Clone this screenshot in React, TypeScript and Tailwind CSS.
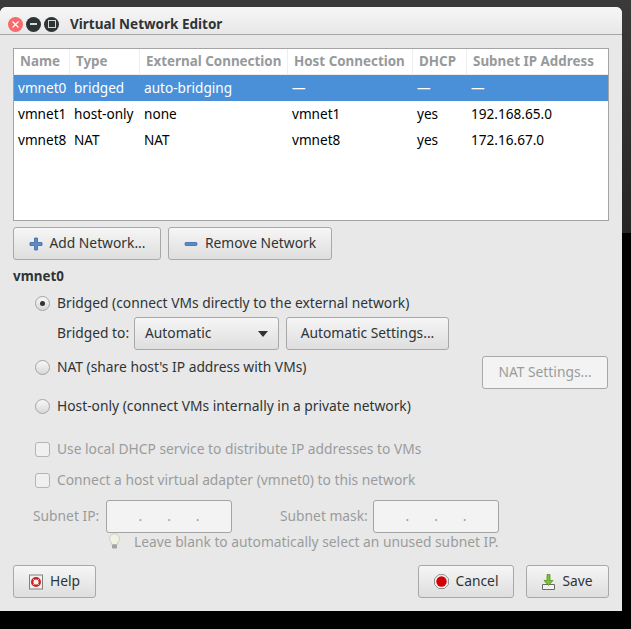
import React from 'react';

const font = "font-['Noto_Sans',sans-serif]";

const columns = [
  { label: 'Name', w: 'w-[56px]' },
  { label: 'Type', w: 'w-[70px]' },
  { label: 'External Connection', w: 'w-[148px]' },
  { label: 'Host Connection', w: 'w-[125px]' },
  { label: 'DHCP', w: 'w-[54px]' },
  { label: 'Subnet IP Address', w: 'flex-1' },
];

const rows = [
  ['vmnet0', 'bridged', 'auto-bridging', '—', '—', '—'],
  ['vmnet1', 'host-only', 'none', 'vmnet1', 'yes', '192.168.65.0'],
  ['vmnet8', 'NAT', 'NAT', 'vmnet8', 'yes', '172.16.67.0'],
];

const Btn = ({ className, disabled, children }: { className: string; disabled?: boolean; children: React.ReactNode }) => (
  <div
    className={`h-[33px] flex items-center justify-center gap-[7px] rounded-[3px] border border-[#a8a8a8] ${
      disabled ? 'bg-[#f3f3f3] text-[#9a9c9c]' : 'bg-gradient-to-b from-[#f6f6f6] to-[#dedede] text-[#2e3436]'
    } ${className}`}
  >
    {children}
  </div>
);

const Radio = ({ checked }: { checked?: boolean }) => (
  <span className="w-[15px] h-[15px] rounded-full border border-[#a4a4a4] bg-gradient-to-b from-[#f8f8f8] to-[#d8d8d8] flex items-center justify-center shrink-0">
    {checked && <span className="w-[5px] h-[5px] rounded-full bg-[#2e3436]" />}
  </span>
);

const IpInput = () => (
  <div className="w-[126px] h-[33px] rounded-[3px] border border-[#a4a4a4] bg-[#f3f3f3] flex items-center justify-center gap-[25px] text-[#9a9c9c]">
    <span>.</span>
    <span>.</span>
    <span>.</span>
  </div>
);

export default function App() {
  return (
    <div className={`w-[631px] h-[629px] bg-[linear-gradient(#3a3a3a_0px,#262626_233px,#000000_233px)] overflow-hidden pt-[7px] text-[13.8px] ${font}`}>
      <div className="w-[622px] h-[604px] bg-[#e8e8e8] rounded-t-[6px] flex flex-col">
        {/* title bar */}
        <div className="h-[28px] shrink-0 rounded-t-[6px] border-b border-[#a6a6a6] bg-gradient-to-b from-[#f6f6f6] to-[#e8e8e8] flex items-center pl-[8px] pt-[7px]">
          <span className="w-[15px] h-[15px] rounded-full bg-[#f8696b] flex items-center justify-center">
            <svg width="9" height="9" viewBox="0 0 9 9"><path d="M1.5 1.5l6 6M7.5 1.5l-6 6" stroke="#fff" strokeWidth="1.2" /></svg>
          </span>
          <span className="ml-[3px] w-[15px] h-[15px] rounded-full bg-[#2e3436] flex items-center justify-center">
            <span className="w-[7px] h-[2px] bg-[#d8d8d8]" />
          </span>
          <span className="ml-[3px] w-[15px] h-[15px] rounded-full bg-[#2e3436] flex items-center justify-center">
            <span className="w-[8px] h-[8px] border-[1.5px] border-[#d8d8d8]" />
          </span>
          <span className="ml-[11px] font-bold text-[#2e3436] text-[13.5px]">Virtual Network Editor</span>
        </div>

        <div className="flex-1 px-[13px] pt-[13px] flex flex-col">
          {/* network table */}
          <div className="w-[596px] h-[173px] bg-white border border-[#a4a4a4] shrink-0 text-[13.6px]">
            <div className="flex h-[26px] border-b border-[#eeeeee]">
              {columns.map((c) => (
                <div key={c.label} className={`${c.w} pl-[6px] font-bold text-[13.4px] text-[#979a9a] border-r border-[#eeeeee] last:border-r-0 flex items-center whitespace-nowrap`}>
                  {c.label}
                </div>
              ))}
            </div>
            {rows.map((r, i) => (
              <div key={r[0]} className={`flex items-center h-[26px] ${i === 0 ? 'bg-[#4a90d9] text-white' : 'text-black'}`}>
                {r.map((cell, j) => (
                  <div key={j} className={`${columns[j].w} pl-[4px] whitespace-nowrap`}>{cell}</div>
                ))}
              </div>
            ))}
          </div>

          {/* add / remove */}
          <div className="flex gap-[7px] mt-[6px]">
            <Btn className="w-[148px]">
              <svg width="14" height="14" viewBox="0 0 14 14"><path d="M5.500 1h3v4.500H13v3H8.500V13h-3V8.500H1v-3h4.500z" fill="#5c8ac8" stroke="#3f69a6" strokeWidth="0.8" strokeLinejoin="round" /></svg>
              <span>Add Network...</span>
            </Btn>
            <Btn className="w-[164px]">
              <svg width="14" height="14" viewBox="0 0 14 14"><rect x="1" y="5.500" width="12" height="3" rx="1" fill="#5c8ac8" stroke="#3f69a6" strokeWidth="0.8" /></svg>
              <span>Remove Network</span>
            </Btn>
          </div>

          <div className="mt-[7px] h-[19px] font-bold text-[13.4px] text-[#2e3436] flex items-center">vmnet0</div>

          <div className="pl-[22px] text-[#2e3436]">
            <div className="mt-[7px] h-[20px] flex items-center gap-[7px]">
              <Radio checked />
              <span>Bridged (connect VMs directly to the external network)</span>
            </div>
            <div className="mt-[4px] flex items-center">
              <span className="pl-[22px] w-[99px] whitespace-nowrap">Bridged to:</span>
              <Btn className="w-[145px] !justify-between px-[10px]">
                <span>Automatic</span>
                <svg width="10" height="6" viewBox="0 0 10 6"><path d="M0 0h10L5 6z" fill="#2e3436" /></svg>
              </Btn>
              <Btn className="ml-[7px] w-[163px]">Automatic Settings...</Btn>
            </div>
            <div className="mt-[7px] h-[39px] flex items-start justify-between pr-[1px]">
              <div className="h-[20px] flex items-center gap-[7px]">
                <Radio />
                <span>NAT (share host's IP address with VMs)</span>
              </div>
              <Btn disabled className="w-[126px] mt-[-1px]">NAT Settings...</Btn>
            </div>
            <div className="mt-[-9px] pt-[9px] h-[29px] flex items-center gap-[7px]">
              <Radio />
              <span>Host-only (connect VMs internally in a private network)</span>
            </div>
            <div className="mt-[23px] h-[20px] flex items-center gap-[7px] text-[#9a9c9c]">
              <span className="w-[15px] h-[15px] rounded-[3px] border border-[#b4b4b4] bg-[#f0f0f0] shrink-0" />
              <span>Use local DHCP service to distribute IP addresses to VMs</span>
            </div>
            <div className="mt-[11px] h-[20px] flex items-center gap-[7px] text-[#9a9c9c]">
              <span className="w-[15px] h-[15px] rounded-[3px] border border-[#b4b4b4] bg-[#f0f0f0] shrink-0" />
              <span>Connect a host virtual adapter (vmnet0) to this network</span>
            </div>
          </div>

          <div className="mt-[10px] flex items-center text-[#9a9c9c]">
            <span className="w-[93px] pl-[20px] whitespace-nowrap">Subnet IP:</span>
            <IpInput />
            <span className="ml-[48px] w-[93px] whitespace-nowrap">Subnet mask:</span>
            <IpInput />
          </div>

          <div className="h-[19px] pl-[95px] flex items-center text-[#9a9c9c]">
            <svg width="13" height="16" viewBox="0 0 13 16" className="shrink-0 mt-[-3px]">
              <path d="M6.500 0.700a5 5 0 0 0-3 9v1.800h6V9.700a5 5 0 0 0-3-9z" fill="#f2f2e2" stroke="#cfcfc2" />
              <rect x="4" y="11.500" width="5" height="4" rx="1" fill="#a2a2a2" />
            </svg>
            <span className="ml-[13px] whitespace-nowrap">Leave blank to automatically select an unused subnet IP.</span>
          </div>

          <div className="mt-[13px] flex">
            <Btn className="w-[83px]">
              <svg width="14" height="16" viewBox="0 0 14 16">
                <rect x="0.500" y="1" width="13" height="14" fill="#f0f0f0" stroke="#808080" />
                <circle cx="7" cy="8" r="3.800" fill="#f4f4f4" stroke="#cc2222" strokeWidth="2.400" />
                <path d="M4.300 5.300l5.400 5.400M9.700 5.300l-5.400 5.400" stroke="#f4f4f4" strokeWidth="1" />
              </svg>
              <span>Help</span>
            </Btn>
            <Btn className="ml-auto w-[96px]">
              <svg width="15" height="15" viewBox="0 0 15 15">
                <path d="M4.600 0.700h5.800l4 4v5.800l-4 4H4.600l-4-4V4.700z" fill="#f4f4f4" stroke="#8a8a8a" />
                <circle cx="7.500" cy="7.500" r="5.200" fill="#d40000" />
              </svg>
              <span>Cancel</span>
            </Btn>
            <Btn className="ml-[12px] w-[83px]">
              <svg width="13" height="16" viewBox="0 0 13 16">
                <path d="M0.500 10.500h12v5h-12z" fill="#f2f2f2" stroke="#6a6a6a" />
                <path d="M5 0.500h3v6h3l-4.500 5-4.500-5h3z" fill="#7cc232" stroke="#4a8a16" strokeWidth="0.7" />
              </svg>
              <span>Save</span>
            </Btn>
          </div>
        </div>
      </div>
    </div>
  );
}
